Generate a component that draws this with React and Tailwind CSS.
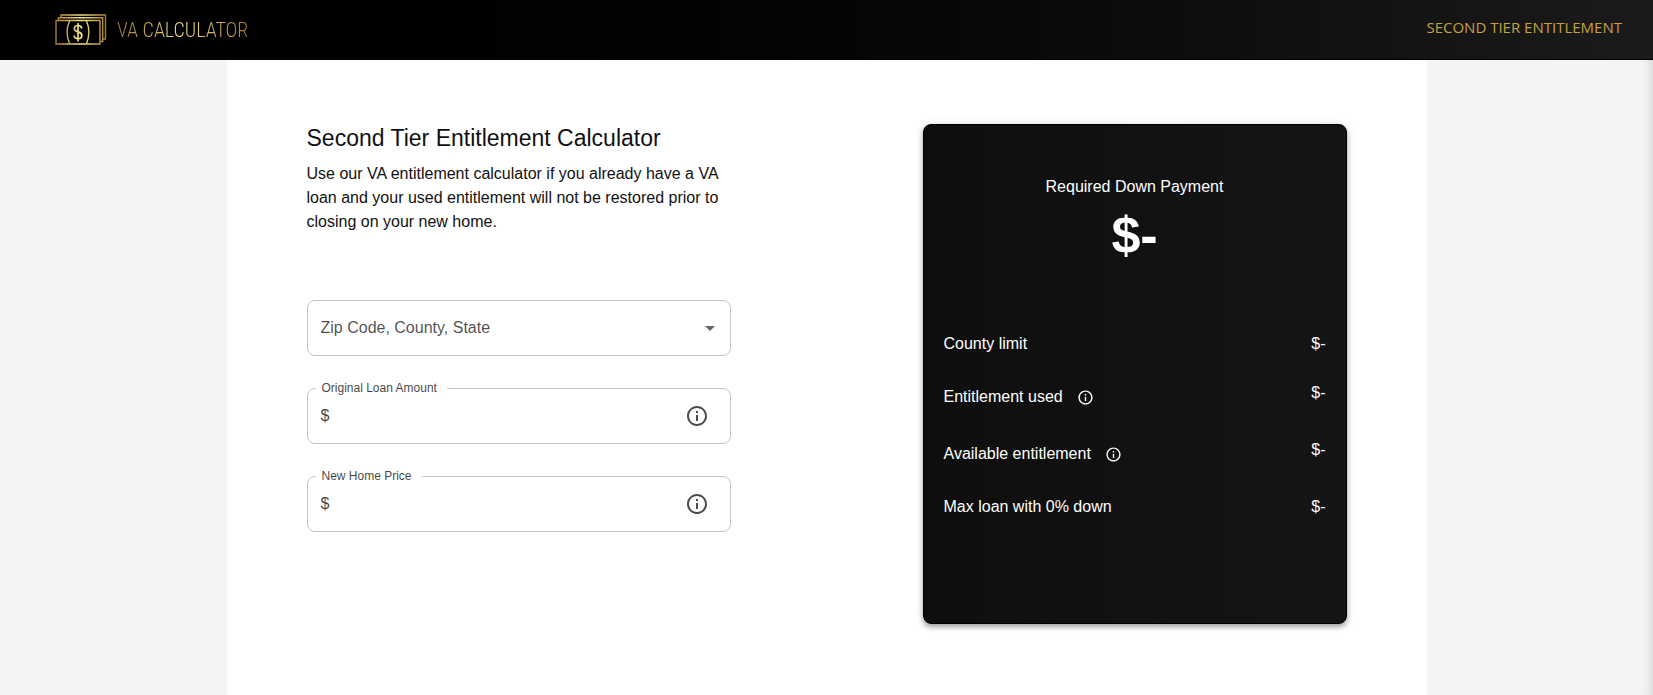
import React from "react";

const INFO_PATH =
  "M11 7h2v2h-2zm0 4h2v6h-2zm1-9C6.48 2 2 6.48 2 12s4.48 10 10 10 10-4.48 10-10S17.52 2 12 2zm0 18c-4.41 0-8-3.59-8-8s3.59-8 8-8 8 3.59 8 8-3.59 8-8 8z";

function InfoIcon({ className }) {
  return (
    <svg viewBox="0 0 24 24" fill="currentColor" aria-hidden="true" className={className}>
      <path d={INFO_PATH} />
    </svg>
  );
}

function BanknotesLogo() {
  return (
    <svg viewBox="0 0 52 32" fill="none" aria-hidden="true" className="h-8 w-[52px]">
      <defs>
        <linearGradient id="gold" gradientUnits="userSpaceOnUse" x1="0" y1="0" x2="52" y2="0">
          <stop offset="0" stopColor="#a3772f" />
          <stop offset="0.5" stopColor="#f5e88a" />
          <stop offset="1" stopColor="#a3772f" />
        </linearGradient>
      </defs>
      <g stroke="url(#gold)" strokeWidth="1.4">
        <path d="M1 6.5h44v23.5H1z" />
        <path d="M3.5 6V3.7h44.2v23.8H45.5" />
        <path d="M6 3.5V1h44.5v24H48" />
        <path d="M14.5 7c-3 7-3 15.5 0 22.500M31.500 7c3 7 3 15.500 0 22.500" />
        <path
          d="M26.800 14.500c-.3-2-1.700-3-3.800-3s-3.700 1.100-3.700 3c0 4.300 7.600 2.500 7.600 7 0 2-1.700 3.200-3.900 3.200s-3.800-1.200-4-3.300M23 9v18.500"
          strokeWidth="1.7"
        />
      </g>
    </svg>
  );
}

function MoneyField({ id, label }) {
  return (
    <div className="relative flex h-14 items-center rounded-lg border border-[#c4c4c4] pr-[21px] pl-[13px] focus-within:border-black">
      <label
        htmlFor={id}
        className="absolute -top-2 left-2 bg-white pr-2.5 pl-1.5 text-xs leading-[14px] text-black/75"
      >
        {label}
      </label>
      <span className="text-black/75">$</span>
      <input
        id={id}
        type="text"
        inputMode="numeric"
        className="h-full min-w-0 flex-1 bg-transparent px-2 text-black/87 outline-none"
      />
      <button type="button" aria-label={`About ${label}`} className="text-black/70">
        <InfoIcon className="size-6" />
      </button>
    </div>
  );
}

function ResultRow({ label, value, info }) {
  return (
    <div className="flex items-start justify-between">
      <dt className={info ? "flex h-8 items-center gap-3.5" : "flex h-6 items-center"}>
        {label}
        {info && (
          <button type="button" aria-label={`About ${label}`}>
            <InfoIcon className="size-[17px]" />
          </button>
        )}
      </dt>
      <dd>{value}</dd>
    </div>
  );
}

export default function App() {
  return (
    <div className="flex min-h-screen flex-col bg-[#f4f4f4] font-['Liberation_Sans',Arial,sans-serif] text-base text-[#111]">
      <header className="flex h-[60px] items-center justify-between border-b border-black bg-linear-to-r from-black to-[#1b1b1b] pr-[31px] pl-[55px]">
        <a href="#home" className="flex items-center gap-2.5">
          <BanknotesLogo />
          <span className="bg-linear-to-r from-[#a3772f] via-[#f5e88a] to-[#a3772f] bg-clip-text font-['Roboto_Condensed','Liberation_Sans_Narrow',Roboto,sans-serif] text-xl leading-8 font-light text-transparent">
            VA CALCULATOR
          </span>
        </a>
        <nav className="pb-1">
          <a
            href="#second-tier"
            className="font-['Open_Sans',sans-serif] text-[15px] leading-6 text-[#c2a244] uppercase"
          >
            Second Tier Entitlement
          </a>
        </nav>
      </header>

      <main className="flex flex-1 justify-center shadow-[inset_-12px_0_12px_-12px_rgba(0,0,0,0.2)]">
        <div className="flex w-full max-w-[1200px] flex-wrap items-start justify-between gap-12 bg-white px-20 py-16">
          <section className="w-full max-w-[424px]">
            <h1 className="text-[23px] leading-7">Second Tier Entitlement Calculator</h1>
            <p className="mt-2.5">
              Use our VA entitlement calculator if you already have a VA loan and your used
              entitlement will not be restored prior to closing on your new home.
            </p>
            <form className="mt-[66px] flex flex-col gap-8">
              <div className="relative">
                <select
                  aria-label="Zip Code, County, State"
                  defaultValue=""
                  className="block h-14 w-full appearance-none rounded-lg border border-[#c4c4c4] bg-white pr-10 pl-[13px] text-black/70"
                >
                  <option value="">Zip Code, County, State</option>
                </select>
                <svg
                  viewBox="0 0 24 24"
                  aria-hidden="true"
                  className="pointer-events-none absolute top-4 right-[9px] size-6 fill-black/60"
                >
                  <path d="M7 10l5 5 5-5z" />
                </svg>
              </div>
              <MoneyField id="loan-amount" label="Original Loan Amount" />
              <MoneyField id="home-price" label="New Home Price" />
            </form>
          </section>

          <section className="min-h-[500px] w-full max-w-[424px] rounded-lg border border-black bg-linear-to-r from-[#0e0e0e] to-[#151515] px-5 pt-[50px] pb-12 text-white shadow-[0_3px_5px_rgba(0,0,0,0.3),0_1px_10px_rgba(0,0,0,0.12)]">
            <h2 className="text-center">Required Down Payment</h2>
            <p className="mt-1.5 text-center text-[52px] leading-[60px] font-bold">$-</p>
            <dl className="mt-[67px] flex flex-col gap-[25px]">
              <ResultRow label="County limit" value="$-" />
              <ResultRow label="Entitlement used" value="$-" info />
              <ResultRow label="Available entitlement" value="$-" info />
              <ResultRow label="Max loan with 0% down" value="$-" />
            </dl>
          </section>
        </div>
      </main>
    </div>
  );
}
